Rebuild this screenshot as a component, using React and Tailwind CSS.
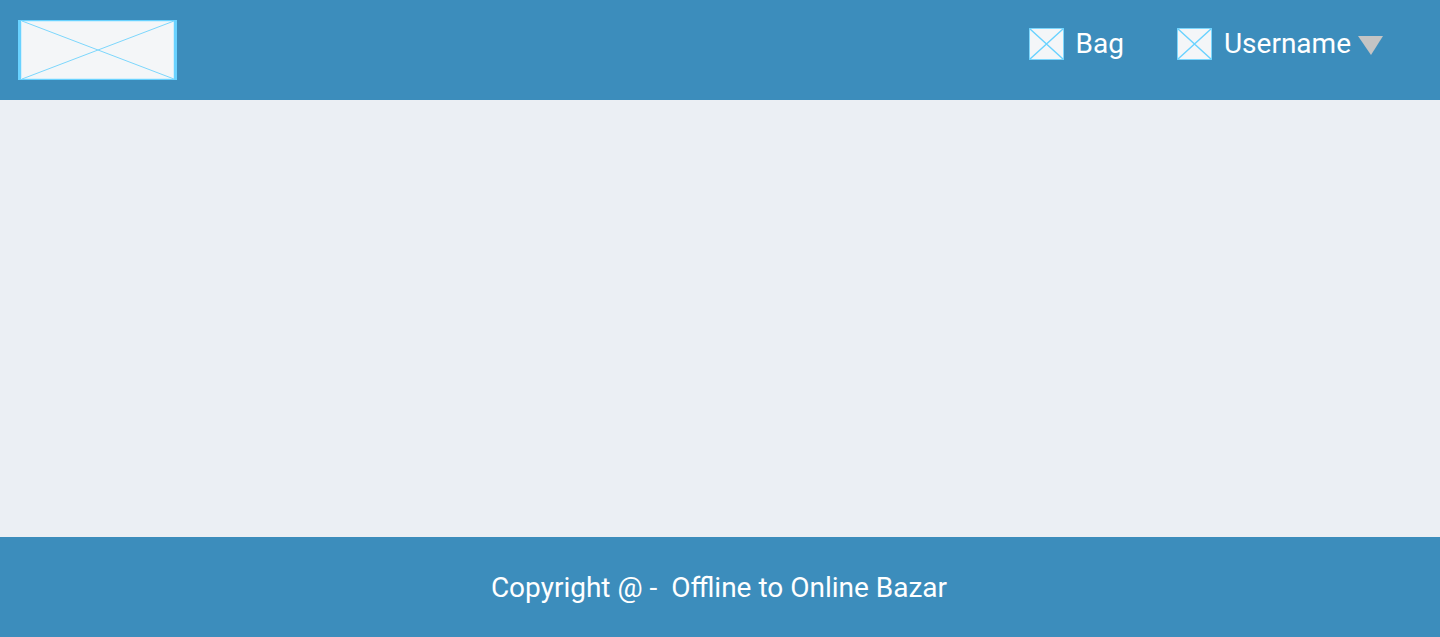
function LogoBox() {
  return (
    <svg className="block" width="159" height="60" viewBox="0 0 159 60" aria-hidden="true">
      <rect width="159" height="60" fill="#69d2ff" />
      <rect x="3" y="1" width="153" height="58" fill="#d3effb" />
      <rect x="4" y="2" width="151" height="56" fill="#f4f6f8" />
      <path d="M4 1L156 59M156 1L4 59" stroke="#7dd7fd" strokeWidth="1" fill="none" />
    </svg>
  );
}

function IconBox() {
  return (
    <svg width="35" height="32" viewBox="0 0 35 32" aria-hidden="true">
      <rect width="35" height="32" fill="#7dd7fd" />
      <rect x="1" y="1" width="33" height="30" fill="#f4f6f8" />
      <path d="M0 0L35 32M35 0L0 32" stroke="#69d2ff" strokeWidth="1.3" fill="none" />
    </svg>
  );
}

export default function App() {
  return (
    <div className="flex min-h-screen flex-col bg-[#ebeff4] font-['Roboto',sans-serif] text-[28px] leading-8 text-white">
      <header className="flex items-start justify-between bg-[#3c8dbc] py-5 pr-[57px] pl-[18px]">
        <a href="#home" aria-label="Home">
          <LogoBox />
        </a>
        <nav className="flex gap-[53px] pt-2">
          <a href="#bag" className="flex items-center gap-3">
            <IconBox />
            <span>Bag</span>
          </a>
          <button type="button" className="flex items-center gap-3">
            <IconBox />
            <span className="flex items-center gap-[7px]">
              Username
              <svg width="25" height="22" viewBox="0 0 25 22" aria-hidden="true">
                <path d="M0 3H25L13 22Z" fill="#c4c4c4" />
              </svg>
            </span>
          </button>
        </nav>
      </header>
      <main className="grow" />
      <footer className="bg-[#3c8dbc] pt-[35px] pr-[2px] pb-[33px] text-center whitespace-pre">
        Copyright @ -  Offline to Online Bazar
      </footer>
    </div>
  );
}
